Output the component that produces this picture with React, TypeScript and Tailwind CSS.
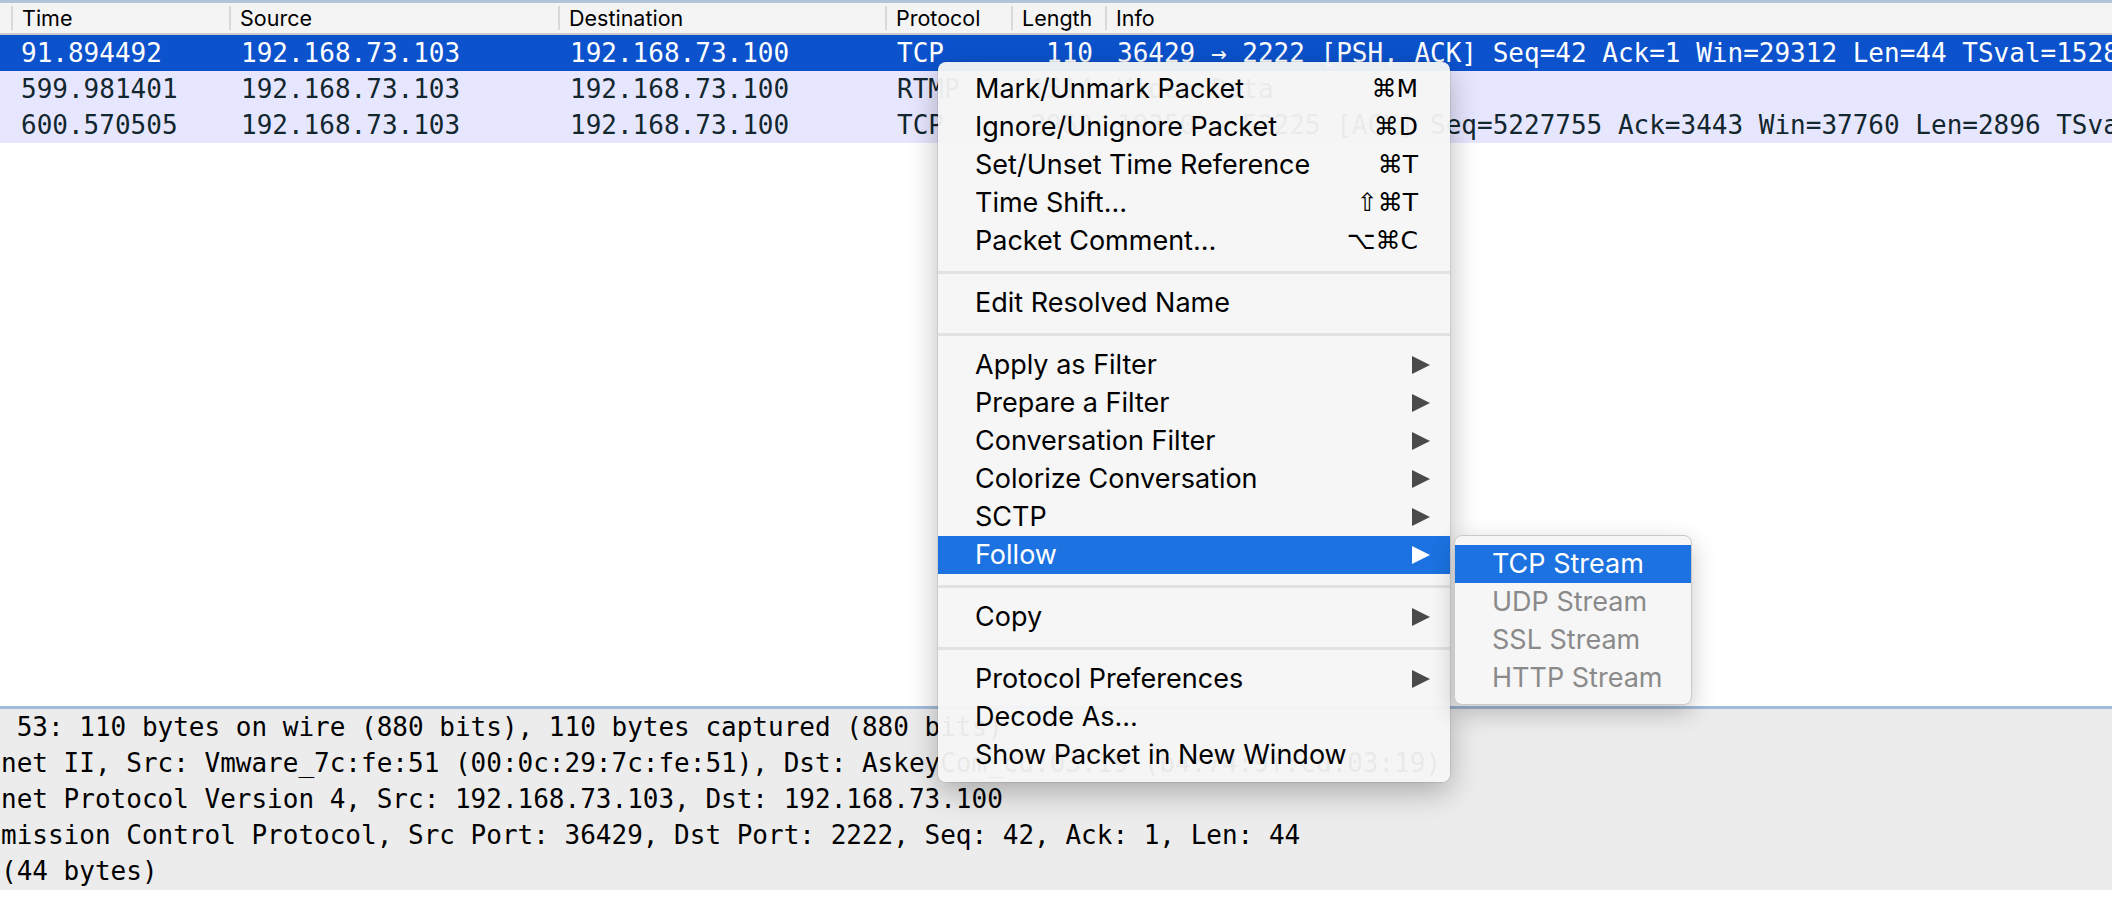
import React from "react";

type Packet = {
  time: string;
  src: string;
  dst: string;
  proto: string;
  len: string;
  info: string;
  selected?: boolean;
};

const packets: Packet[] = [
  {
    time: "91.894492",
    src: "192.168.73.103",
    dst: "192.168.73.100",
    proto: "TCP",
    len: "110",
    info: "36429 → 2222 [PSH, ACK] Seq=42 Ack=1 Win=29312 Len=44 TSval=1528331 TSecr=3386911",
    selected: true,
  },
  {
    time: "599.981401",
    src: "192.168.73.103",
    dst: "192.168.73.100",
    proto: "RTMP",
    len: "1514",
    info: "Video Data",
  },
  {
    time: "600.570505",
    src: "192.168.73.103",
    dst: "192.168.73.100",
    proto: "TCP",
    len: "2962",
    info: "19350 → 52225 [ACK] Seq=5227755 Ack=3443 Win=37760 Len=2896 TSval=1618200 TSecr=3476512",
  },
];

type MenuItem =
  | { label: string; shortcut?: string; sub?: boolean; active?: boolean }
  | "sep";

const menuItems: MenuItem[] = [
  { label: "Mark/Unmark Packet", shortcut: "⌘M" },
  { label: "Ignore/Unignore Packet", shortcut: "⌘D" },
  { label: "Set/Unset Time Reference", shortcut: "⌘T" },
  { label: "Time Shift…", shortcut: "⇧⌘T" },
  { label: "Packet Comment…", shortcut: "⌥⌘C" },
  "sep",
  { label: "Edit Resolved Name" },
  "sep",
  { label: "Apply as Filter", sub: true },
  { label: "Prepare a Filter", sub: true },
  { label: "Conversation Filter", sub: true },
  { label: "Colorize Conversation", sub: true },
  { label: "SCTP", sub: true },
  { label: "Follow", sub: true, active: true },
  "sep",
  { label: "Copy", sub: true },
  "sep",
  { label: "Protocol Preferences", sub: true },
  { label: "Decode As…" },
  { label: "Show Packet in New Window" },
];

const streams = ["TCP Stream", "UDP Stream", "SSL Stream", "HTTP Stream"];

const details = [
  " 53: 110 bytes on wire (880 bits), 110 bytes captured (880 bits)",
  "net II, Src: Vmware_7c:fe:51 (00:0c:29:7c:fe:51), Dst: AskeyCom_cd:03:19 (b4:74:9f:cd:03:19)",
  "net Protocol Version 4, Src: 192.168.73.103, Dst: 192.168.73.100",
  "mission Control Protocol, Src Port: 36429, Dst Port: 2222, Seq: 42, Ack: 1, Len: 44",
  "(44 bytes)",
];

function Arrow({ white }: { white?: boolean }) {
  return (
    <svg width="18" height="18" viewBox="0 0 18 18" className="shrink-0">
      <polygon points="0,0 18,9 0,18" fill={white ? "#ffffff" : "#4a4a4a"} />
    </svg>
  );
}

function HeaderCell({ label, className }: { label: string; className: string }) {
  return (
    <div className={`flex items-center h-full ${className}`}>
      <span className="h-[24px] w-[2px] bg-[#d9d9d9]" />
      <span className="pl-[9px]">{label}</span>
    </div>
  );
}

function PacketList() {
  return (
    <div className="flex flex-col">
      <div className="h-[3px] bg-[#b3c3d8]" />
      <div className="flex h-[32px] bg-[#f4f4f4] border-b-2 border-[#cbcbcb] text-[21.5px] text-black font-['Inter',sans-serif] whitespace-nowrap">
        <div className="w-[11px]" />
        <HeaderCell label="Time" className="w-[218px]" />
        <HeaderCell label="Source" className="w-[329px]" />
        <HeaderCell label="Destination" className="w-[327px]" />
        <HeaderCell label="Protocol" className="w-[126px]" />
        <HeaderCell label="Length" className="w-[94px]" />
        <HeaderCell label="Info" className="flex-1" />
      </div>
      {packets.map((p) => (
        <div
          key={p.time}
          className={`flex h-[36px] items-center whitespace-nowrap overflow-hidden font-['DejaVu_Sans_Mono',monospace] text-[26px] ${
            p.selected ? "bg-[#0b52cc] text-white" : "bg-[#e7e6ff] text-[#12272e]"
          }`}
        >
          <div className="w-[11px] shrink-0" />
          <div className="w-[218px] shrink-0 pl-[10px]">{p.time}</div>
          <div className="w-[329px] shrink-0 pl-3">{p.src}</div>
          <div className="w-[327px] shrink-0 pl-3">{p.dst}</div>
          <div className="w-[126px] shrink-0 pl-3">{p.proto}</div>
          <div className="w-[94px] shrink-0 pr-3 text-right">{p.len}</div>
          <div className="pl-3">{p.info}</div>
        </div>
      ))}
    </div>
  );
}

function ContextMenu() {
  return (
    <div className="absolute left-[938px] top-[62px] w-[512px] py-2 rounded-[8px] bg-[#f6f6f6]/95 shadow-[0_10px_30px_rgba(0,0,0,0.28),0_0_0_1px_rgba(0,0,0,0.08)] font-['Inter',sans-serif] text-[27px] text-black">
      {menuItems.map((item, i) =>
        item === "sep" ? (
          <div key={i} className="h-[24px] flex items-center">
            <div className="h-[3px] w-full bg-[#e2e2e2]" />
          </div>
        ) : (
          <div
            key={i}
            className={`flex items-center h-[38px] pl-[37px] pr-[20px] whitespace-nowrap ${
              item.active ? "bg-[#1b72e0] text-white" : ""
            }`}
          >
            <span className="flex-1">{item.label}</span>
            {item.shortcut && (
              <span className="mr-[12px] font-['DejaVu_Sans',sans-serif] text-[25px]">{item.shortcut}</span>
            )}
            {item.sub && <Arrow white={item.active} />}
          </div>
        )
      )}
    </div>
  );
}

function FollowMenu() {
  return (
    <div className="absolute left-[1454px] top-[535px] w-[238px] pt-[9px] pb-[7px] rounded-[8px] bg-[#f6f6f6] border border-[#c9c9c9] shadow-[0_8px_24px_rgba(0,0,0,0.22)] font-['Inter',sans-serif] text-[27px]">
      {streams.map((s, i) => (
        <div
          key={s}
          className={`flex items-center h-[38px] pl-[37px] whitespace-nowrap ${
            i === 0 ? "bg-[#1b72e0] text-white" : "text-[#8a8a8a]"
          }`}
        >
          {s}
        </div>
      ))}
    </div>
  );
}

function DetailPane() {
  return (
    <div className="flex flex-col">
      <div className="h-[3px] bg-[#a3bbd9]" />
      <div className="h-[181px] bg-[#ececec] pl-[1px] font-['DejaVu_Sans_Mono',monospace] text-[26px] text-black whitespace-pre overflow-hidden">
        {details.map((d, i) => (
          <div key={i} className="h-[36px] leading-[36px]">
            {d}
          </div>
        ))}
      </div>
    </div>
  );
}

export default function App() {
  return (
    <div className="relative h-[908px] w-[2112px] overflow-hidden bg-white flex flex-col">
      <PacketList />
      <div className="flex-1 bg-white" />
      <DetailPane />
      <div className="h-[18px] bg-white" />
      <ContextMenu />
      <FollowMenu />
    </div>
  );
}
